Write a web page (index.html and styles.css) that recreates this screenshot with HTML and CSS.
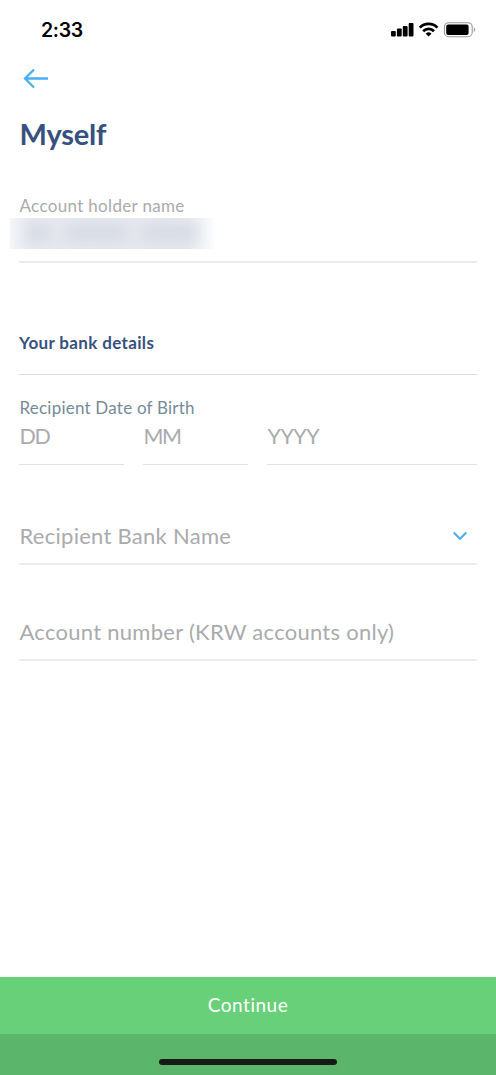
FILE: index.html
```html
<!DOCTYPE html>
<html lang="en">
<head>
<meta charset="utf-8">
<title>Myself</title>
<link rel="stylesheet" href="styles.css">
</head>
<body>
<div class="screen">
  <header class="status">
    <span class="time">2:33</span>
    <svg class="status-icons" width="86" height="18" viewBox="0 0 86 18">
      <rect x="1" y="10" width="4.8" height="5.6" rx="1"/>
      <rect x="6.9" y="7.6" width="4.8" height="8" rx="1"/>
      <rect x="12.8" y="5" width="4.8" height="10.6" rx="1"/>
      <rect x="18.7" y="1.9" width="4.8" height="13.7" rx="1"/>
      <g fill="none" stroke="#000" stroke-width="2.7">
        <path d="M29.8 6.6a12.4 12.4 0 0 1 17.6 0"/>
        <path d="M33.2 10.2a7.6 7.6 0 0 1 10.8 0"/>
      </g>
      <path d="M38.6 15.6l-2.9-2.9a4.1 4.1 0 0 1 5.8 0z"/>
      <rect x="54.4" y="1.7" width="27.8" height="14" rx="4.2" fill="none" stroke="#999" stroke-width="1.1"/>
      <rect x="56.2" y="3.6" width="22.4" height="10.3" rx="2"/>
      <path d="M83.8 6.4v4.6q1.5-.7 1.5-2.3t-1.5-2.3z" fill="#999"/>
    </svg>
  </header>
  <nav class="nav">
    <svg class="back" width="26" height="22" viewBox="0 0 26 22">
      <path d="M11 1.5L2 10.5l9 9M2 10.5h23"/>
    </svg>
  </nav>
  <main class="content">
    <h1 class="title">Myself</h1>
    <section class="field holder">
      <div class="label">Account holder name</div>
      <div class="redacted"><div class="smudges"><i class="smudge first"></i><i class="smudge second"></i><i class="smudge third"></i></div></div>
    </section>
    <h2 class="section-title">Your bank details</h2>
    <section class="birth">
      <div class="label birth-label">Recipient Date of Birth</div>
      <div class="dates">
        <div class="date day">DD</div>
        <div class="date month">MM</div>
        <div class="date year">YYYY</div>
      </div>
    </section>
    <div class="field select">
      <span class="bank">Recipient Bank Name</span>
      <svg class="chevron" width="16" height="10" viewBox="0 0 16 10"><path d="M1.7 1.5L8 7.8l6.3-6.3"/></svg>
    </div>
    <div class="field account">Account number (KRW accounts only)</div>
  </main>
  <footer class="footer">
    <div class="continue">Continue</div>
    <div class="home"><div class="home-bar"></div></div>
  </footer>
</div>
</body>
</html>
```
FILE: styles.css
```css
* { box-sizing: border-box; }
body { margin: 0; background: #fff; font-family: Lato, sans-serif; }
.screen { width: 496px; height: 1075px; display: flex; flex-direction: column; overflow: hidden; }
.status { height: 60px; padding: 0 20px 0 41px; display: flex; align-items: center; justify-content: space-between; }
.time { font: 600 19.5px/24px Inter, sans-serif; letter-spacing: -.35px; color: #000; }
.status-icons { display: block; }
.nav { height: 40px; padding: 8px 0 0 23px; }
.back { display: block; fill: none; stroke: #48aff5; stroke-width: 2.3; }
.content { flex: 1; padding: 0 19px; }
.title { margin: 16px 0 0; padding-left: .5px; font-size: 29px; line-height: 36px; font-weight: 700; color: #37517e; letter-spacing: -.2px; }
.field { border-bottom: 2px solid #ececec; }
.holder { height: 70px; margin-top: 41px; }
.label { padding-left: .5px; font-size: 17px; line-height: 25px; letter-spacing: .33px; color: #a9abad; }
.redacted { width: 204px; height: 31px; margin: 0 0 0 -9px; overflow: hidden; background: linear-gradient(90deg, #f4f5f8, #e6e9ef 22px, #e5e8ee 178px, #f8f9fb 200px, #fcfcfd); }
.smudges { display: flex; gap: 14px; padding: 7px 0 0 16px; filter: blur(7px); }
.smudge { height: 16px; background: #d6dae4; }
.first { width: 25px; }
.second { width: 63px; }
.third { width: 54px; }
.section-title { height: 46px; margin: 66px 0 0; border-bottom: 1px solid #dcdfe1; font-size: 17px; line-height: 27px; font-weight: 700; letter-spacing: .35px; color: #37517e; }
.birth { margin-top: 20px; }
.birth-label { color: #768b98; letter-spacing: .22px; }
.dates { display: grid; grid-template-columns: 105px 105px 210px; gap: 19px; }
.date { height: 45px; padding-left: .5px; border-bottom: 1px solid #dfe3e4; font-size: 21.5px; line-height: 32px; color: #a9abad; }
.day { letter-spacing: -1.3px; }
.month { letter-spacing: -1.5px; }
.year { letter-spacing: -.5px; }
.select { height: 56px; margin-top: 44px; display: flex; align-items: center; justify-content: space-between; padding: 0 9px 1px 0; }
.bank, .account { padding-left: .5px; font-size: 22px; line-height: 30px; letter-spacing: .27px; color: #a9abad; }
.chevron { display: block; fill: none; stroke: #48aff5; stroke-width: 2; }
.account { height: 56px; margin-top: 40px; padding-top: 12px; }
.footer { height: 98px; }
.continue { height: 57px; background: #67d079; color: #fff; font-size: 19px; line-height: 56px; text-align: center; letter-spacing: .5px; }
.home { height: 41px; padding-top: 25px; background: #5bb56b; }
.home-bar { width: 178px; height: 6px; margin: 0 auto; border-radius: 3px; background: #161b17; }
```
